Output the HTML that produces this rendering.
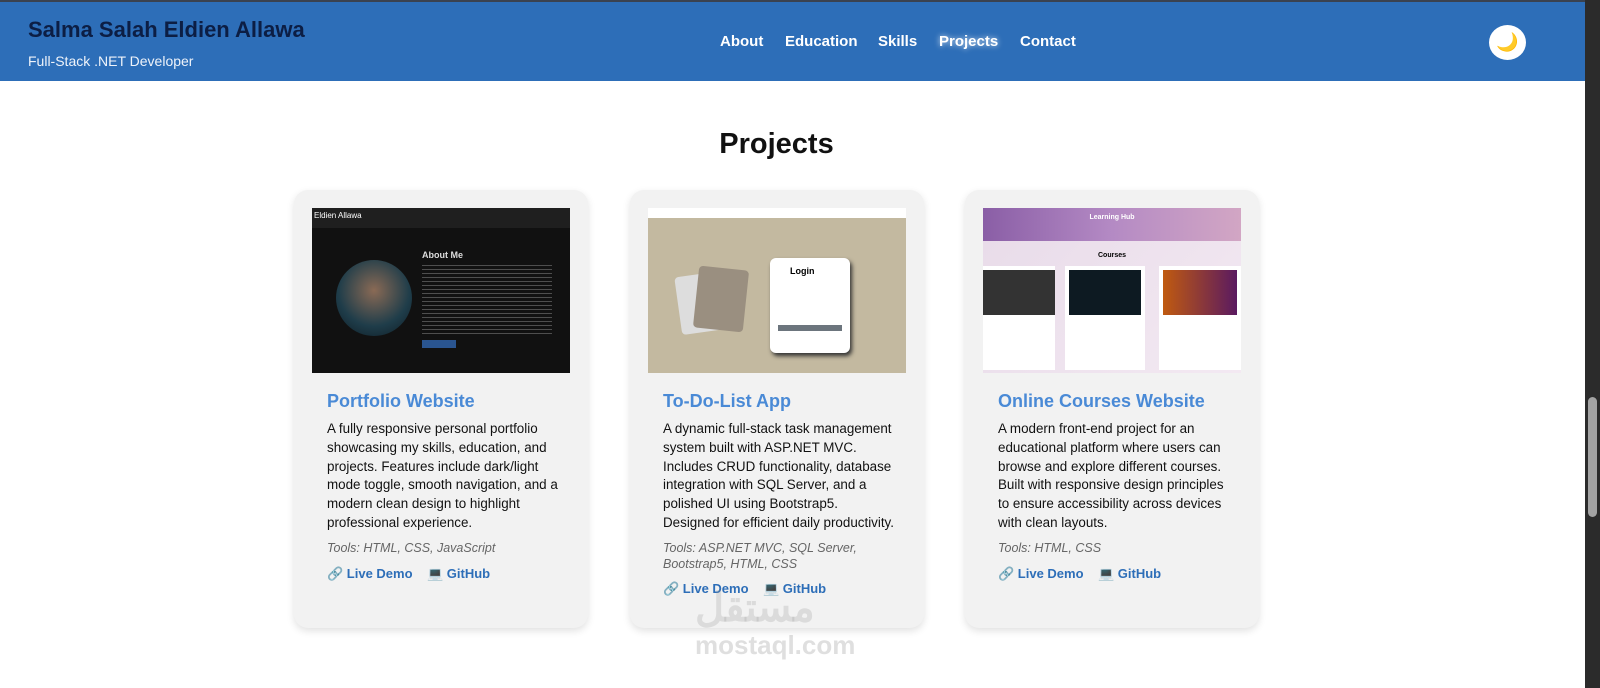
<!DOCTYPE html>
<html><head><meta charset="utf-8"><style>
*{box-sizing:border-box;margin:0;padding:0}
body{width:1600px;height:688px;overflow:hidden;background:#fff;font-family:"Liberation Sans",Arial,sans-serif;position:relative}
.hdr{position:absolute;left:0;top:0;width:1585px;height:81px;background:#2d6eb8;border-top:2px solid #3a4250}
.name{position:absolute;left:28px;top:15px;font-size:22px;font-weight:bold;color:#0c1e44}
.sub{position:absolute;left:28px;top:51px;font-size:14px;color:#eef3fa}
.nav{position:absolute;top:31px;font-size:15px;font-weight:bold;color:#fff}
.moon{position:absolute;left:1489px;top:23px;width:37px;height:35px;border-radius:50%;background:#fff;text-align:center;line-height:35px;font-size:18px}
.sb{position:absolute;left:1585px;top:0;width:15px;height:688px;background:#2b2b2b}
.thumb{position:absolute;left:1588px;top:397px;width:9px;height:120px;border-radius:5px;background:#a3a3a3}
h2{position:absolute;left:0;width:1553px;text-align:center;top:128px;font-size:29px;font-weight:bold;color:#111}
.card{position:absolute;top:190px;width:294px;height:438px;background:#f2f2f2;border-radius:14px;box-shadow:0 3px 8px rgba(0,0,0,.12)}
.img{position:absolute;left:18px;top:18px;width:258px;height:165px;overflow:hidden}
.t{position:absolute;left:33px;top:201px;font-size:18px;font-weight:bold;color:#4a8ad6}
.d{position:absolute;left:33px;top:230px;width:232px;font-size:13.4px;line-height:18.8px;color:#111}
.tl{position:absolute;left:33px;font-size:12.5px;font-style:italic;color:#666;width:240px;line-height:16px}
.lk{position:absolute;left:33px;font-size:13px;font-weight:bold;color:#2d6eb8}
.lk i{font-style:normal;color:#222}
.wm{position:absolute;left:695px;top:585px;font-size:40px;font-weight:bold;color:rgba(150,150,150,.25)}
.wm2{position:absolute;left:695px;top:630px;font-size:26px;font-weight:bold;color:rgba(150,150,150,.3)}
</style></head><body>
<div class="hdr">
<div class="name">Salma Salah Eldien Allawa</div>
<div class="sub">Full-Stack .NET Developer</div>
<div class="nav" style="left:720px">About</div>
<div class="nav" style="left:785px">Education</div>
<div class="nav" style="left:878px">Skills</div>
<div class="nav" style="left:939px;text-shadow:0 0 6px rgba(255,255,255,.8)">Projects</div>
<div class="nav" style="left:1020px">Contact</div>
<div class="moon">🌙</div>
</div>
<div class="sb"></div><div class="thumb"></div>
<h2>Projects</h2>

<div class="card" style="left:294px">
<div class="img" style="background:#111">
<div style="height:20px;background:#1f1f1f;color:#fff;font-size:8px;padding:3px 2px">Eldien Allawa</div>
<div style="position:absolute;left:24px;top:52px;width:76px;height:76px;border-radius:50%;background:radial-gradient(circle at 50% 40%,#8a6a55,#1f3d4a 60%,#0d1a22)"></div>
<div style="position:absolute;left:110px;top:42px;color:#ddd;font-size:9px;font-weight:bold">About Me</div>
<div style="position:absolute;left:110px;top:57px;width:130px;height:70px;background:repeating-linear-gradient(#777 0 1px,transparent 1px 4px);opacity:.6"></div>
<div style="position:absolute;left:110px;top:132px;width:34px;height:8px;background:#2a5590"></div>
</div>
<div class="t">Portfolio Website</div>
<div class="d">A fully responsive personal portfolio showcasing my skills, education, and projects. Features include dark/light mode toggle, smooth navigation, and a modern clean design to highlight professional experience.</div>
<div class="tl" style="top:350px">Tools: HTML, CSS, JavaScript</div>
<div class="lk" style="top:376px"><i>🔗</i> Live Demo &nbsp;&nbsp; <i>💻</i> GitHub</div>
</div>

<div class="card" style="left:630px">
<div class="img" style="background:#c3b9a0">
<div style="height:10px;background:#fff"></div>
<div style="position:absolute;left:30px;top:65px;width:62px;height:58px;background:#ddd;border-radius:4px;transform:rotate(-8deg)"></div>
<div style="position:absolute;left:48px;top:60px;width:50px;height:62px;background:#9a8f80;border-radius:4px;transform:rotate(6deg)"></div>
<div style="position:absolute;left:122px;top:50px;width:80px;height:95px;background:#fff;border-radius:6px;box-shadow:2px 3px 4px #333"></div>
<div style="position:absolute;left:142px;top:58px;font-size:9px;font-weight:bold">Login</div>
<div style="position:absolute;left:130px;top:117px;width:64px;height:6px;background:#6c757d"></div>
</div>
<div class="t">To-Do-List App</div>
<div class="d">A dynamic full-stack task management system built with ASP.NET MVC. Includes CRUD functionality, database integration with SQL Server, and a polished UI using Bootstrap5. Designed for efficient daily productivity.</div>
<div class="tl" style="top:350px">Tools: ASP.NET MVC, SQL Server, Bootstrap5, HTML, CSS</div>
<div class="lk" style="top:391px"><i>🔗</i> Live Demo &nbsp;&nbsp; <i>💻</i> GitHub</div>
</div>

<div class="card" style="left:965px">
<div class="img" style="background:linear-gradient(135deg,#e8dbe9,#f3e9f2)">
<div style="height:33px;background:linear-gradient(90deg,#8a5ea6,#b48ac4,#d2a6c4);color:#fff;font-size:7px;font-weight:bold;text-align:center;padding-top:6px">Learning Hub</div>
<div style="position:absolute;left:0;top:44px;width:258px;text-align:center;font-size:7px;font-weight:bold">Courses</div>
<div style="position:absolute;left:0;top:58px;width:72px;height:104px;background:#fff"><div style="height:45px;background:#333;margin-top:4px"></div></div>
<div style="position:absolute;left:82px;top:58px;width:80px;height:104px;background:#fff"><div style="height:45px;background:#0d1a22;margin:4px"></div></div>
<div style="position:absolute;left:176px;top:58px;width:82px;height:104px;background:#fff"><div style="height:45px;background:linear-gradient(90deg,#c05a10,#5a1a60);margin:4px"></div></div>
</div>
<div class="t">Online Courses Website</div>
<div class="d">A modern front-end project for an educational platform where users can browse and explore different courses. Built with responsive design principles to ensure accessibility across devices with clean layouts.</div>
<div class="tl" style="top:350px">Tools: HTML, CSS</div>
<div class="lk" style="top:376px"><i>🔗</i> Live Demo &nbsp;&nbsp; <i>💻</i> GitHub</div>
</div>
<div class="wm">مستقل</div>
<div class="wm2">mostaql.com</div>
</body></html>
